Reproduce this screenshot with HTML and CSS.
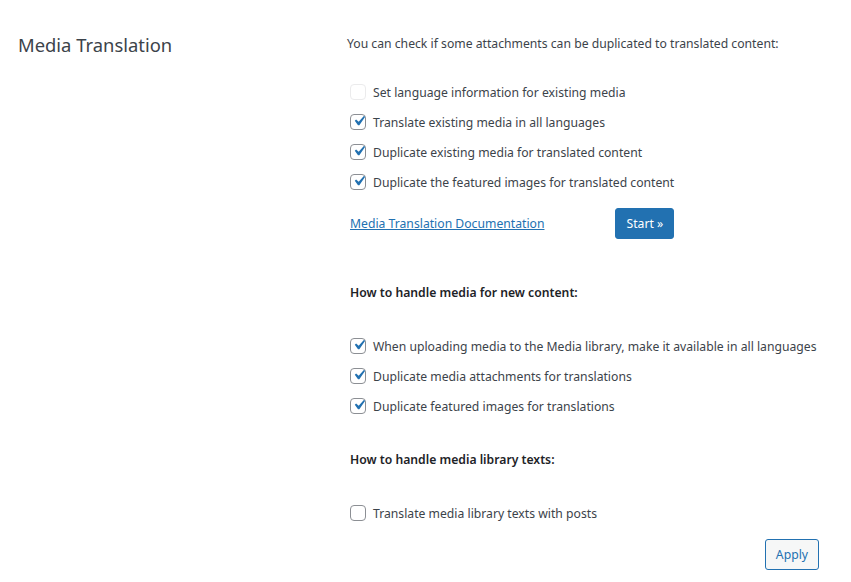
FILE: index.html
```html
<!DOCTYPE html>
<html lang="en">
<head>
    <meta charset="UTF-8">
    <meta name="viewport" content="width=device-width, initial-scale=1.0">
    <title>Media Translation</title>
    <link rel="stylesheet" href="styles.css">
</head>

<body>
    <div class="settings-row">
        <h2 class="settings-title">Media Translation</h2>

        <div class="settings-body">
            <p class="intro">You can check if some attachments can be duplicated to translated content:</p>

            <!-- Существующие медиафайлы -->
            <ul class="options">
                <li class="option">
                    <span class="check disabled"></span>
                    <span>Set language information for existing media</span>
                </li>
                <li class="option">
                    <span class="check checked"><svg viewBox="0 0 20 20"><path d="M14.83 4.89l1.34.94-5.81 8.38H9.02L5.78 9.67l1.34-1.25 2.57 2.4z"/></svg></span>
                    <span>Translate existing media in all languages</span>
                </li>
                <li class="option">
                    <span class="check checked"><svg viewBox="0 0 20 20"><path d="M14.83 4.89l1.34.94-5.81 8.38H9.02L5.78 9.67l1.34-1.25 2.57 2.4z"/></svg></span>
                    <span>Duplicate existing media for translated content</span>
                </li>
                <li class="option">
                    <span class="check checked"><svg viewBox="0 0 20 20"><path d="M14.83 4.89l1.34.94-5.81 8.38H9.02L5.78 9.67l1.34-1.25 2.57 2.4z"/></svg></span>
                    <span>Duplicate the featured images for translated content</span>
                </li>
            </ul>

            <div class="actions">
                <a href="#" class="doc-link">Media Translation Documentation</a>
                <button class="button-primary">Start »</button>
            </div>

            <h3 class="group-title first">How to handle media for new content:</h3>
            <ul class="options">
                <li class="option">
                    <span class="check checked"><svg viewBox="0 0 20 20"><path d="M14.83 4.89l1.34.94-5.81 8.38H9.02L5.78 9.67l1.34-1.25 2.57 2.4z"/></svg></span>
                    <span>When uploading media to the Media library, make it available in all languages</span>
                </li>
                <li class="option">
                    <span class="check checked"><svg viewBox="0 0 20 20"><path d="M14.83 4.89l1.34.94-5.81 8.38H9.02L5.78 9.67l1.34-1.25 2.57 2.4z"/></svg></span>
                    <span>Duplicate media attachments for translations</span>
                </li>
                <li class="option">
                    <span class="check checked"><svg viewBox="0 0 20 20"><path d="M14.83 4.89l1.34.94-5.81 8.38H9.02L5.78 9.67l1.34-1.25 2.57 2.4z"/></svg></span>
                    <span>Duplicate featured images for translations</span>
                </li>
            </ul>

            <h3 class="group-title">How to handle media library texts:</h3>
            <ul class="options">
                <li class="option">
                    <span class="check"></span>
                    <span>Translate media library texts with posts</span>
                </li>
            </ul>

            <div class="submit-row">
                <button class="button-secondary">Apply</button>
            </div>
        </div>
    </div>
</body>
</html>
```

FILE: styles.css
```css
body {
    margin: 0;
    font-family: "Noto Sans", "Open Sans", sans-serif;
    font-size: 12.2px;
    color: #3c434a;
    background-color: #fff;
}

.settings-row {
    display: grid;
    grid-template-columns: 329px 1fr;
    padding: 0 32px 0 18px;
}

.settings-title {
    margin: 33px 0 0;
    font-size: 18.4px;
    font-weight: 400;
    line-height: 1.3;
    color: #3c434a;
}

.settings-body {
    padding-top: 34px;
}

.intro {
    margin: 0 0 23px;
    line-height: 20px;
}

.options {
    list-style: none;
    margin: 0;
    padding: 0 0 0 3px;
}

.option {
    display: flex;
    align-items: center;
    gap: 7px;
    height: 30px;
    white-space: nowrap;
}

.check {
    box-sizing: border-box;
    width: 16px;
    height: 16px;
    border: 1px solid #8c8f94;
    border-radius: 4px;
    background-color: #fff;
    display: flex;
    align-items: center;
    justify-content: center;
    flex-shrink: 0;
}

.check svg {
    width: 20px;
    height: 20px;
    margin: -3px -4px 0 -3px;
    fill: #2271b1;
}

.check.disabled {
    border-color: #ebebec;
    background-color: #fff;
}

.actions {
    display: flex;
    align-items: center;
    gap: 71px;
    padding-left: 3px;
    margin-top: 11px;
}

.doc-link {
    color: #2271b1;
    text-decoration: underline;
}

button {
    font-family: inherit;
    font-size: 12.2px;
    height: 31px;
    padding: 0 10px;
    border-radius: 3px;
    cursor: pointer;
}

.button-primary {
    background-color: #2271b1;
    border: 1px solid #2271b1;
    color: #fff;
}

.button-secondary {
    background-color: #f6f7f7;
    border: 1px solid #2271b1;
    color: #2271b1;
}

.group-title {
    margin: 29px 0 28px;
    padding-left: 3px;
    font-size: 12.2px;
    font-weight: 600;
    line-height: 20px;
    color: #1d2327;
}

.group-title.first {
    margin-top: 44px;
}

.submit-row {
    display: flex;
    justify-content: flex-end;
    margin-top: 11px;
}
```
